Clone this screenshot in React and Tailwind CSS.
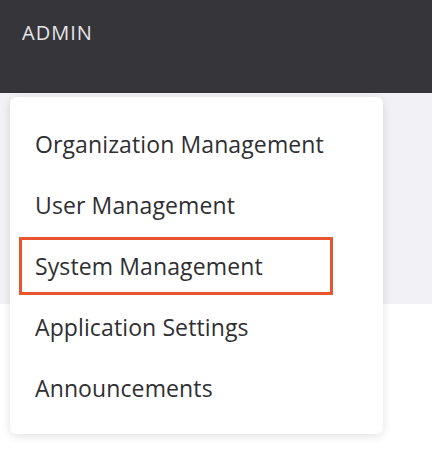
import React from "react";

const items = ["Organization Management", "User Management", "System Management", "Application Settings", "Announcements"];

export default function App() {
  return (
    <div className="relative w-[432px] h-[458px] bg-white overflow-hidden" style={{ fontFamily: "'Open Sans', 'Noto Sans', sans-serif" }}>
      <div className="h-[93px] bg-[#363539] px-[22px] pt-[18px]">
        <span className="text-[20px] tracking-[0.05em] text-[#e4e4e6]">ADMIN</span>
      </div>
      <div className="h-[211px] bg-[#f2f2f6]" />
      {/* dropdown menu */}
      <div className="absolute left-[10px] top-[97px] w-[373px] h-[337px] bg-white rounded-md shadow-[0_2px_10px_rgba(0,0,0,0.12)] pl-[9px] pt-[18px] flex flex-col gap-[3px]">
        {items.map((t) => (
          <div
            key={t}
            className={`h-[58px] flex items-center px-[13px] text-[23px] font-medium tracking-[0.005em] text-[#2f2f33] ${t === "System Management" ? "w-[314px] border-[3px] border-[#e8542f]" : "border-[3px] border-transparent"}`}
          >
            {t}
          </div>
        ))}
      </div>
    </div>
  );
}
